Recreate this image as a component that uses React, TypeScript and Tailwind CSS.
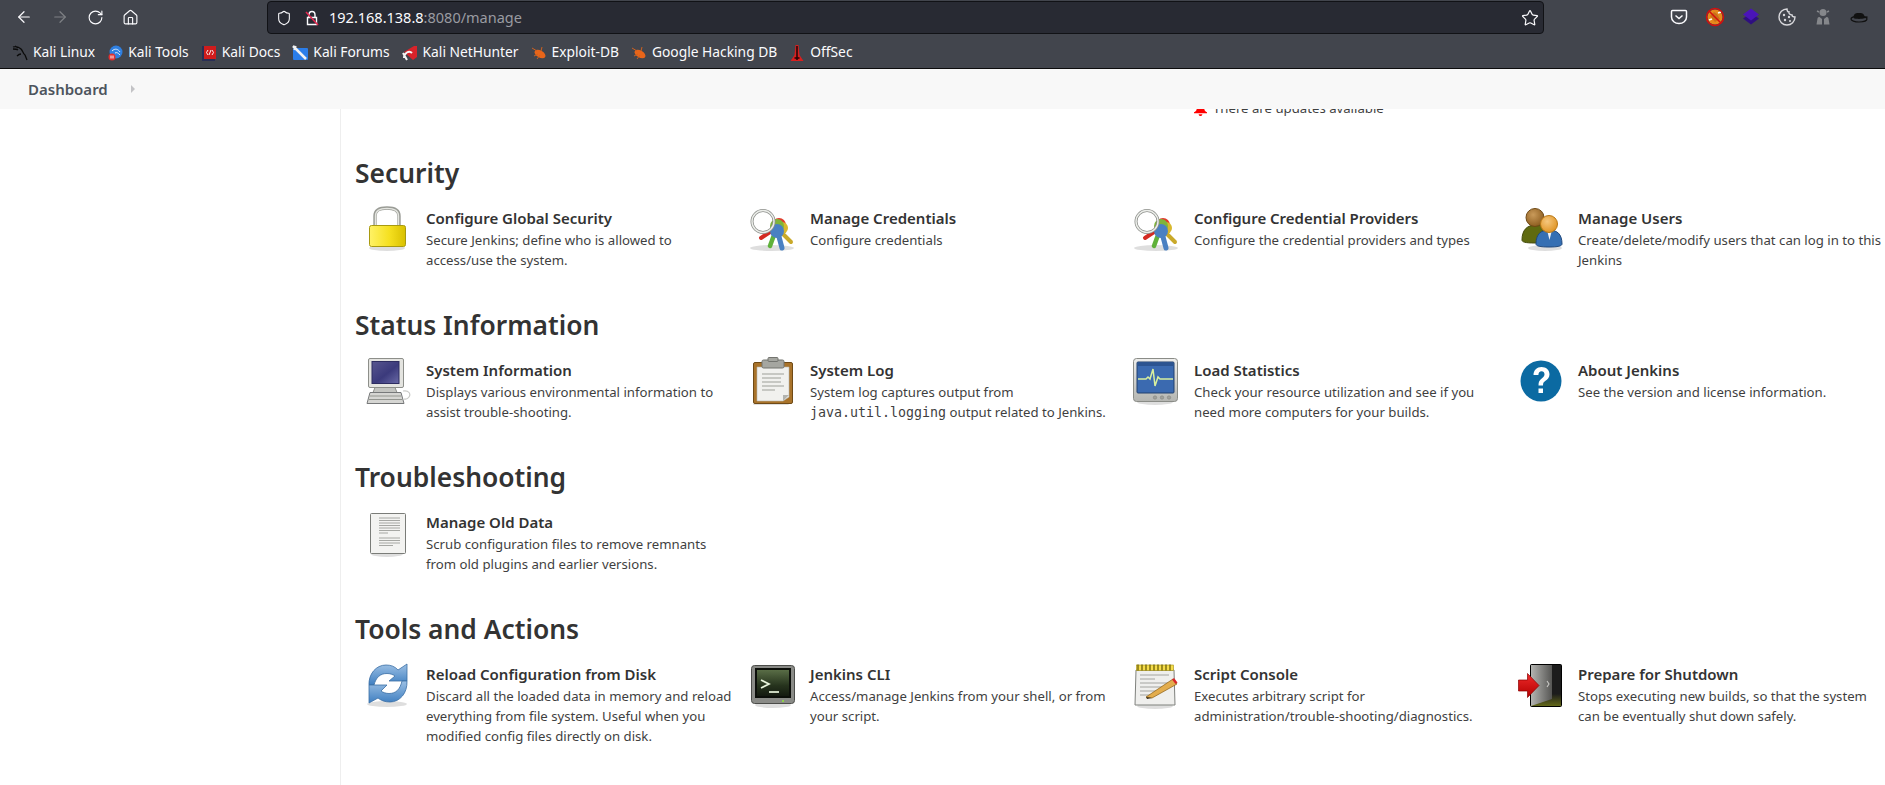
import { FC, ReactNode } from "react";
import { ArrowLeft, ArrowRight, RotateCw, House, Shield, Star } from "lucide-react";

type ItemType = {
  icon: ReactNode;
  title: string;
  text: ReactNode;
};

const Shadow: FC<{ cx?: number; cy?: number; rx?: number }> = ({ cx = 24, cy = 43, rx = 20 }) => (
  <ellipse cx={cx} cy={cy} rx={rx} ry={3} fill="#000" opacity={0.13} />
);

const LockIcon = () => (
  <svg viewBox="0 0 48 48" className="w-12 h-12">
    <defs>
      <linearGradient id="lockBody" x1="0" x2="1" y1="0" y2="0">
        <stop offset="0" stopColor="#fff266" />
        <stop offset="0.55" stopColor="#f5e020" />
        <stop offset="1" stopColor="#d9c000" />
      </linearGradient>
    </defs>
    <Shadow cy={43} rx={18} />
    <path d="M12 21V11C12 5.500 16 3 24 3s12 2.500 12 8v10" fill="none" stroke="#9a9c96" strokeWidth={3.4} />
    <path d="M12.500 21V11C12.500 6 16 3.400 24 3.400S35.500 6 35.500 11v10" fill="none" stroke="#e4e5e0" strokeWidth={1.4} />
    <rect x={6.500} y={20.500} width={36} height={21} rx={2} fill="url(#lockBody)" stroke="#a89a10" />
  </svg>
);

const KeysIcon = () => (
  <svg viewBox="0 0 48 48" className="w-12 h-12">
    <Shadow cx={25} cy={43} rx={22} />
    <g transform="translate(1 0)">
      <path d="M33 27l10 10" stroke="#c9a92a" strokeWidth={4} strokeLinecap="round" />
      <path d="M22 27l-9 6" stroke="#d42a22" strokeWidth={4} strokeLinecap="round" />
      <path d="M26 30l-4 11" stroke="#5fb13a" strokeWidth={4.500} strokeLinecap="round" />
      <circle cx={31} cy={20} r={7} fill="#df3b2c" />
      <circle cx={34} cy={23} r={6} fill="#d8b82e" />
      <circle cx={29} cy={21} r={7} fill="#7fb43a" />
      <circle cx={29} cy={26} r={7} fill="#4a80c2" />
      <path d="M30 28l4 15" stroke="#4a80c2" strokeWidth={5} strokeLinecap="round" />
      <circle cx={15} cy={16.500} r={11} fill="none" stroke="#8e908c" strokeWidth={3} />
      <circle cx={15} cy={16.500} r={11} fill="none" stroke="#eceeea" strokeWidth={1.400} />
    </g>
  </svg>
);

const UsersIcon = () => (
  <svg viewBox="0 0 48 48" className="w-12 h-12">
    <defs>
      <radialGradient id="headA" cx="0.4" cy="0.35" r="0.7">
        <stop offset="0" stopColor="#c99a5a" />
        <stop offset="1" stopColor="#8a5a1c" />
      </radialGradient>
      <radialGradient id="headB" cx="0.4" cy="0.35" r="0.7">
        <stop offset="0" stopColor="#f5c77e" />
        <stop offset="1" stopColor="#df9220" />
      </radialGradient>
    </defs>
    <Shadow cx={30} cy={43} rx={17} />
    <g transform="translate(2 0)">
      <path d="M5 35c0-10 5-15 14-15s12 5 12 15c0 2-3 3-13 3S5 37 5 35z" fill="#5f6a10" stroke="#434a0c" />
      <circle cx={18} cy={12.500} r={9} fill="url(#headA)" stroke="#6e4814" />
      <path d="M19 39c0-10 5-14 13-14s13 4 13 14c0 2-4 3-13 3s-13-1-13-3z" fill="#356fb3" stroke="#21497d" />
      <path d="M30 25h5l-2.500 10z" fill="#eef2f6" />
      <circle cx={32} cy={19} r={8.500} fill="url(#headB)" stroke="#b97714" />
    </g>
  </svg>
);

const ComputerIcon = () => (
  <svg viewBox="0 0 48 48" className="w-12 h-12">
    <defs>
      <linearGradient id="screenBlue" x1="0" x2="1" y1="0" y2="1">
        <stop offset="0" stopColor="#58568f" />
        <stop offset="0.55" stopColor="#3b3a7c" />
        <stop offset="1" stopColor="#6a6aa6" />
      </linearGradient>
    </defs>
    <rect x={5.500} y={1.500} width={35} height={29} rx={1.500} fill="#e4e4e0" stroke="#8d8f8a" />
    <rect x={9} y={4.500} width={27} height={22} fill="url(#screenBlue)" stroke="#2d2c60" />
    <path d="M12 30.500h20l2 5H10z" fill="#c4c5c1" stroke="#8d8f8a" />
    <path d="M7 35.500h31l3 11H4z" fill="#d6d6d3" stroke="#77797a" />
    <path d="M7 39h31M6 42.500h33" stroke="#93958f" strokeWidth={1.200} />
    <path d="M40 34c6-1 8 3 6 6s-4 2-5 2" fill="none" stroke="#c8c9c6" strokeWidth={1.200} />
  </svg>
);

const ClipboardIcon = () => (
  <svg viewBox="0 0 48 48" className="w-12 h-12">
    <Shadow cy={47} rx={18} />
    <rect x={6.500} y={5.500} width={39} height={41} rx={1.500} fill="#a9732a" stroke="#6f4a16" />
    <path d="M10 10h32v30l-6 4H10z" fill="#f1f1ee" stroke="#b5b5b0" strokeWidth={0.6} />
    <path d="M36 44l6-6h-6z" fill="#b2b3ae" />
    <path d="M15 17h22M15 21h19M15 25h19M15 29h22M15 33h13" stroke="#b9bab5" strokeWidth={1.600} />
    <rect x={15} y={3} width={22} height={8} rx={1.500} fill="#a5a6a0" stroke="#73746f" />
    <rect x={21} y={0.500} width={10} height={4} rx={1} fill="#a5a6a0" stroke="#73746f" />
  </svg>
);

const MonitorIcon = () => (
  <svg viewBox="0 0 48 48" className="w-12 h-12">
    <defs>
      <linearGradient id="monCase" x1="0" x2="0" y1="0" y2="1">
        <stop offset="0" stopColor="#eeeeec" />
        <stop offset="1" stopColor="#b4b5b1" />
      </linearGradient>
    </defs>
    <Shadow cy={45} rx={18} />
    <rect x={2.500} y={1.500} width={44} height={43} rx={3} fill="url(#monCase)" stroke="#8a8c87" />
    <rect x={6} y={5} width={37} height={31} rx={1} fill="#3b6ab0" stroke="#22406f" />
    <rect x={7} y={6} width={35} height={3} fill="#2c5491" />
    <path d="M7 22h8l2-2 2 2 3-10 2 17 3-9 2 2h13" fill="none" stroke="#d8ef9e" strokeWidth={1.500} />
    <circle cx={24} cy={40.500} r={1.700} fill="#a0a19c" stroke="#7a7b77" strokeWidth={0.5} />
    <circle cx={31} cy={40.500} r={1.700} fill="#a0a19c" stroke="#7a7b77" strokeWidth={0.5} />
    <circle cx={38} cy={40.500} r={1.700} fill="#a0a19c" stroke="#7a7b77" strokeWidth={0.5} />
  </svg>
);

const HelpIcon = () => (
  <svg viewBox="0 0 48 48" className="w-12 h-12">
    <circle cx={26} cy={24} r={20.500} fill="#0b6aa2" />
    <g transform="translate(3 0)">
      <path d="M15.500 18c0-5 3.500-8 8-8s8 2.800 8 7.200c0 3.300-1.800 5-4.300 6.800-1.800 1.300-2.200 2.200-2.200 4.500h-4.500c0-3.800.9-5.400 3.500-7.300 1.800-1.300 2.500-2.300 2.500-3.900 0-1.800-1.200-3-2.900-3-2 0-3.200 1.400-3.200 3.700z" fill="#fff" />
      <rect x={20.500} y={31.500} width={4.500} height={4.500} fill="#fff" />
    </g>
  </svg>
);

const DocumentIcon = () => (
  <svg viewBox="0 0 48 48" className="w-12 h-12">
    <Shadow cy={45} rx={16} />
    <rect x={7.500} y={4.500} width={35} height={40} rx={1} fill="#f3f3f1" stroke="#7a7c78" />
    <path d="M16 9h21M16 11.500h21M16 14h21M16 16.500h21M16 19h21M16 21.500h21M16 24h9M16 29h21M16 31.500h21M16 34h21M16 36.500h14" stroke="#a6a7a3" />
  </svg>
);

const ReloadIcon = () => (
  <svg viewBox="0 0 48 48" className="w-12 h-12">
    <defs>
      <linearGradient id="reloadBlue" x1="0" x2="0" y1="0" y2="1">
        <stop offset="0" stopColor="#9cc0e4" />
        <stop offset="1" stopColor="#3f7fc1" />
      </linearGradient>
    </defs>
    <Shadow cy={43} rx={20} />
    <path d="M6 24c-.5-11 7-20 17-20 5 0 9 1.500 12 5l9-6v17H26l6-5c-2-1.500-5-2.500-8-2.500-7 0-11 4-13 11.500z" fill="url(#reloadBlue)" stroke="#3b6ea5" strokeWidth={0.8} />
    <path d="M44 20c.5 12-7 21-17 21-5 0-9-1.500-12-4l-9 5V24h18l-6 6c2 1.500 5 2.500 8 2.500 7 0 11-4 13-12.500z" fill="url(#reloadBlue)" stroke="#3b6ea5" strokeWidth={0.8} />
  </svg>
);

const TerminalIcon = () => (
  <svg viewBox="0 0 48 48" className="w-12 h-12">
    <defs>
      <linearGradient id="termScreen" x1="0" x2="0" y1="0" y2="1">
        <stop offset="0" stopColor="#596d46" />
        <stop offset="0.6" stopColor="#26331d" />
        <stop offset="1" stopColor="#141a10" />
      </linearGradient>
    </defs>
    <Shadow cx={26} cy={44} rx={18} />
    <rect x={4.500} y={4.500} width={43} height={38} rx={3} fill="#8a8b87" stroke="#4b4c49" />
    <rect x={8} y={7} width={36} height={30} fill="#0c0f0a" />
    <rect x={10} y={9} width={32} height={26} fill="url(#termScreen)" />
    <path d="M14 19l8 4-8 4" fill="none" stroke="#e9f5dc" strokeWidth={1.700} />
    <path d="M22 31h10" stroke="#e9f5dc" strokeWidth={1.700} />
    <rect x={35} y={39} width={2} height={2} fill="#8ed24a" />
  </svg>
);

const NotepadIcon = () => (
  <svg viewBox="0 0 48 48" className="w-12 h-12">
    <Shadow cy={45} rx={18} />
    <path d="M5 9h38l1 35H4z" fill="#efefed" stroke="#7f817d" />
    <rect x={5.500} y={4} width={37} height={5.500} fill="#f6dd4a" stroke="#a08c12" strokeWidth={0.6} />
    <path d="M7 3.500v6M11 3.500v6M15 3.500v6M19 3.500v6M23 3.500v6M27 3.500v6M31 3.500v6M35 3.500v6M39 3.500v6" stroke="#6e6208" strokeWidth={1.300} />
    <path d="M9 14h29M9 18h15M9 22h29M9 26h24M9 30h22M9 34h10" stroke="#a3a4a0" />
    <path d="M15 36l27-18 4 5-25 14z" fill="#e3ad4d" stroke="#8a5d12" strokeWidth={0.7} />
    <path d="M41 18.500l2-1.500 3.500 4.500-2 1.500z" fill="#d8272a" />
    <path d="M15 36l6 1-5 1z" fill="#3a2a10" />
  </svg>
);

const DoorIcon = () => (
  <svg viewBox="0 0 48 48" className="w-12 h-12">
    <defs>
      <linearGradient id="doorGrey" x1="0" x2="1" y1="0" y2="0">
        <stop offset="0" stopColor="#b4b4b1" />
        <stop offset="1" stopColor="#565654" />
      </linearGradient>
      <linearGradient id="doorFloor" x1="0" x2="0" y1="0" y2="1">
        <stop offset="0.7" stopColor="#1c1c1c" />
        <stop offset="1" stopColor="#666b18" />
      </linearGradient>
      <linearGradient id="doorArrow" x1="0" x2="0" y1="0" y2="1">
        <stop offset="0" stopColor="#ef2b2b" />
        <stop offset="1" stopColor="#b20000" />
      </linearGradient>
    </defs>
    <rect x={15.500} y={3.500} width={31} height={42} rx={1} fill="url(#doorFloor)" stroke="#000" />
    <path d="M16 4h21v34L16 45z" fill="url(#doorGrey)" />
    <path d="M32 20l2 3-2 3" fill="none" stroke="#c9c9c6" strokeWidth={1.100} />
    <path d="M3.500 19h9v-6.500L24 24.500 12.500 36.500v-6.500h-9z" fill="url(#doorArrow)" stroke="#8c0000" strokeWidth={0.7} />
  </svg>
);

const sections: { title: string; items: ItemType[] }[] = [
  {
    title: "Security",
    items: [
      { icon: <LockIcon />, title: "Configure Global Security", text: "Secure Jenkins; define who is allowed to access/use the system." },
      { icon: <KeysIcon />, title: "Manage Credentials", text: "Configure credentials" },
      { icon: <KeysIcon />, title: "Configure Credential Providers", text: "Configure the credential providers and types" },
      { icon: <UsersIcon />, title: "Manage Users", text: "Create/delete/modify users that can log in to this Jenkins" }
    ]
  },
  {
    title: "Status Information",
    items: [
      { icon: <ComputerIcon />, title: "System Information", text: "Displays various environmental information to assist trouble-shooting." },
      {
        icon: <ClipboardIcon />,
        title: "System Log",
        text: (
          <>
            System log captures output from{" "}
            <code className="font-['DejaVu_Sans_Mono',monospace] text-[13.3px]">java.util.logging</code> output related to Jenkins.
          </>
        )
      },
      { icon: <MonitorIcon />, title: "Load Statistics", text: "Check your resource utilization and see if you need more computers for your builds." },
      { icon: <HelpIcon />, title: "About Jenkins", text: "See the version and license information." }
    ]
  },
  {
    title: "Troubleshooting",
    items: [
      { icon: <DocumentIcon />, title: "Manage Old Data", text: "Scrub configuration files to remove remnants from old plugins and earlier versions." }
    ]
  },
  {
    title: "Tools and Actions",
    items: [
      { icon: <ReloadIcon />, title: "Reload Configuration from Disk", text: "Discard all the loaded data in memory and reload everything from file system. Useful when you modified config files directly on disk." },
      { icon: <TerminalIcon />, title: "Jenkins CLI", text: "Access/manage Jenkins from your shell, or from your script." },
      { icon: <NotepadIcon />, title: "Script Console", text: "Executes arbitrary script for administration/trouble-shooting/diagnostics." },
      { icon: <DoorIcon />, title: "Prepare for Shutdown", text: "Stops executing new builds, so that the system can be eventually shut down safely." }
    ]
  }
];

const BugIcon = () => (
  <svg viewBox="0 0 16 16" className="w-4 h-4">
    <ellipse cx={9} cy={9} rx={6} ry={3.500} transform="rotate(30 9 9)" fill="#e8651a" />
    <path d="M1 3l5 3M3 11l4-2M6 14l3-4M11 2l-1 4" stroke="#d0611f" />
  </svg>
);

const bookmarks: { label: string; icon: ReactNode }[] = [
  {
    label: "Kali Linux",
    icon: (
      <svg viewBox="0 0 16 16" className="w-4 h-4">
        <path d="M1 2c3-1 6 0 8 2 2 2 2 5 4 6l2 5M3 1l3 2M1 4c2 0 4 0 5 1M9 9c-2 0-3 1-4 2" fill="none" stroke="#0b0b0b" strokeWidth={1.300} />
      </svg>
    )
  },
  {
    label: "Kali Tools",
    icon: (
      <svg viewBox="0 0 16 16" className="w-4 h-4">
        <circle cx={9} cy={7} r={6.500} fill="#2f7fe0" />
        <path d="M5 6c3-3 6-2 8 1M8 8c2-1 3 0 5 2" fill="none" stroke="#dfeefc" />
        <circle cx={5} cy={12} r={3.500} fill="#e03030" />
        <path d="M4 10.500v3M6 10.500v3" stroke="#fff" />
      </svg>
    )
  },
  {
    label: "Kali Docs",
    icon: (
      <svg viewBox="0 0 16 16" className="w-4 h-4">
        <rect x={1} y={1} width={13} height={15} fill="#2a2f55" />
        <rect x={3} y={1} width={12} height={13} fill="#d01c1c" />
        <path d="M7 5L5.500 7.500 7 10M11 5l1.500 2.500L11 10M10 5L8 10" fill="none" stroke="#fff" strokeWidth={0.9} />
      </svg>
    )
  },
  {
    label: "Kali Forums",
    icon: (
      <svg viewBox="0 0 16 16" className="w-4 h-4">
        <rect x={1} y={3} width={15} height={12} rx={1} fill="#2b7de9" />
        <path d="M1 1l13 13" stroke="#f2f2f2" strokeWidth={2.500} />
        <path d="M4 1L2 5" stroke="#f2f2f2" strokeWidth={1.500} />
      </svg>
    )
  },
  {
    label: "Kali NetHunter",
    icon: (
      <svg viewBox="0 0 16 16" className="w-4 h-4">
        <path d="M2 7l10-6h3v11l-4 3z" fill="#d8232a" />
        <path d="M2 13c0-5 5-8 8-5M1 8l4 7" fill="none" stroke="#f4f4f4" strokeWidth={2} />
      </svg>
    )
  },
  { label: "Exploit-DB", icon: <BugIcon /> },
  { label: "Google Hacking DB", icon: <BugIcon /> },
  {
    label: "OffSec",
    icon: (
      <svg viewBox="0 0 16 16" className="w-4 h-4">
        <path d="M6.500 0h3l1 10 4 6h-13l4-6z" fill="#d81f1f" />
        <path d="M8 1v14M5.500 13h5" stroke="#220505" strokeWidth={1.500} />
      </svg>
    )
  }
];

const ToolbarAddons = () => (
  <div className="flex items-center gap-[16px] mr-[16px]">
    <svg viewBox="0 0 20 20" className="w-5 h-5">
      <path d="M3.500 3.500h13c.8 0 1 .5 1 1V10c0 4-3.500 6.500-7.500 6.500S2.500 14 2.500 10V4.500c0-.5.200-1 1-1z" fill="none" stroke="#fbfbfe" strokeWidth={1.500} />
      <path d="M6.500 8.500L10 11.500l3.500-3" fill="none" stroke="#fbfbfe" strokeWidth={1.500} />
    </svg>
    <svg viewBox="0 0 20 20" className="w-5 h-5">
      <circle cx={10} cy={10} r={7.500} fill="#e58a1c" />
      <path d="M5 9l4-4 3 2 3 5-5 3z" fill="#c9701a" />
      <path d="M4 13l3-1M13 6l3-1" stroke="#fff" strokeWidth={1.500} />
      <circle cx={10} cy={10} r={8.500} fill="none" stroke="#d40f0f" strokeWidth={1.500} />
      <path d="M4 4l12 12" stroke="#d40f0f" strokeWidth={1.500} />
    </svg>
    <svg viewBox="0 0 20 20" className="w-5 h-5">
      <path d="M10 6l8 5.500-8 6-8-6z" fill="#2f0f80" />
      <path d="M10 1.500l8 6-8 6-8-6z" fill="#4a14b8" />
    </svg>
    <svg viewBox="0 0 20 20" className="w-5 h-5">
      <path d="M10 2a8 8 0 1 0 8 8c-2 0-3-1-3-2-2 0-3.500-1.500-3-3-1.500 0-2-1.500-2-3z" fill="none" stroke="#d8d8dc" strokeWidth={1.400} />
      <circle cx={7} cy={8} r={1.200} fill="#d8d8dc" />
      <circle cx={12} cy={10} r={1.200} fill="#d8d8dc" />
      <circle cx={8} cy={13} r={1.200} fill="#d8d8dc" />
      <circle cx={13} cy={14} r={1} fill="#d8d8dc" />
    </svg>
    <svg viewBox="0 0 20 20" className="w-5 h-5">
      <circle cx={10} cy={5.500} r={3.500} fill="#85878b" />
      <path d="M4 4l2 1M16 4l-2 1" stroke="#85878b" strokeWidth={1.500} />
      <path d="M3.500 17.500l1-6c.2-1 1-1.500 2-1.500L9 12v5.500zM16.500 17.500l-1-6c-.2-1-1-1.500-2-1.500L11 12v5.500z" fill="#85878b" />
    </svg>
    <svg viewBox="0 0 20 20" className="w-5 h-5">
      <ellipse cx={10} cy={12} rx={8} ry={3} fill="none" stroke="#111" strokeWidth={1.200} />
      <path d="M4.500 11c0-3 .5-5 5.500-5s5.500 2 5.500 5c-2 1.200-9 1.200-11 0z" fill="#111" />
      <path d="M15 10.500l3.500-.5" stroke="#111" strokeWidth={1.400} />
    </svg>
  </div>
);

const Browser = () => (
  <header className="h-[69px] shrink-0 bg-[#42454d] border-b border-[#0c0c0d] font-['Noto_Sans',sans-serif] text-[#fbfbfe]">
    <div className="flex items-center h-[35px] pb-[1px]">
      <div className="flex items-center w-[267px] pl-[15px] gap-[18px]">
        <ArrowLeft size={18} strokeWidth={1.6} />
        <ArrowRight size={18} strokeWidth={1.6} className="text-[#7e8085]" />
        <RotateCw size={17} strokeWidth={1.6} />
        <House size={17} strokeWidth={1.6} />
      </div>
      <div className="flex flex-1 items-center h-[33px] mt-[1px] rounded-[4px] bg-[#282a33] border border-[#111216] pl-[8px] pr-[4px]">
        <Shield size={16} strokeWidth={1.6} />
        <svg viewBox="0 0 16 16" className="w-4 h-4 ml-[12px]">
          <path d="M3.500 7.500h9v7h-9z" fill="none" stroke="#fbfbfe" strokeWidth={1.400} />
          <path d="M5 7.500V5c0-2 1.200-3.500 3-3.500S11 3 11 5v2.500" fill="none" stroke="#fbfbfe" strokeWidth={1.400} />
          <path d="M2 2l12 13" stroke="#e22850" strokeWidth={1.600} />
        </svg>
        <span className="ml-[9px] text-[14.5px] leading-none">
          192.168.138.8<span className="text-[#9a9ba1]">:8080/manage</span>
        </span>
        <Star size={18} strokeWidth={1.6} className="ml-auto" />
      </div>
      <div className="flex justify-end w-[341px]">
        <ToolbarAddons />
      </div>
    </div>
    <div className="flex items-center h-[33px] pt-[2px] pl-[12px] gap-[12px] text-[13.8px]">
      {bookmarks.map((b) => (
        <div key={b.label} className="flex items-center gap-[5px]">
          {b.icon}
          <span>{b.label}</span>
        </div>
      ))}
    </div>
  </header>
);

const Item: FC<ItemType> = ({ icon, title, text }) => (
  <div className="flex gap-[15px] pl-4">
    <div className="w-12 h-12 shrink-0 -mt-[3px]">{icon}</div>
    <div className="flex-1 -mr-[7px]">
      <p className="text-[15px] leading-5 font-semibold text-[#333]">{title}</p>
      <p className="mt-[2px] text-[13.2px] leading-5 text-[#3f3f3f]">{text}</p>
    </div>
  </div>
);

export default function App() {
  return (
    <div className="flex flex-col w-[1885px] h-[785px] overflow-hidden bg-white font-['Noto_Sans',sans-serif]">
      <Browser />

      <div className="flex items-center h-[40px] shrink-0 bg-[#f8f8f8] pl-[28px]">
        <span className="text-[15px] font-semibold text-[#4d545d]">Dashboard</span>
        <svg viewBox="0 0 6 8" className="w-[6px] h-2 ml-[22px]">
          <path d="M1 0l4 4-4 4z" fill="#c3c3c6" />
        </svg>
      </div>

      <div className="flex flex-1 overflow-hidden">
        <aside className="w-[340px] shrink-0" />

        <main className="flex-1 border-l border-[#eee]">
          <div className="flex items-center h-5 -mt-[10px] ml-[853px] gap-[6px] text-[13.2px] text-[#3f3f3f]">
            <svg viewBox="0 0 14 14" className="w-[13px] h-[13px]">
              <path d="M7 0c3 0 4 2 4 5 0 3 1 4 3 5v1H0v-1c2-1 3-2 3-5 0-3 1-5 4-5zM5 12h4c0 1-1 2-2 2s-2-1-2-2z" fill="#f00" />
            </svg>
            <span>There are updates available</span>
          </div>

          <div className="mt-[36px] pl-[6px] pr-[2px]">
            {sections.map((s) => (
              <section key={s.title} className="h-[152px]">
                <h2 className="pl-[8px] h-[36px] mb-[17px] text-[26.4px] leading-[36px] font-semibold text-[#333]">{s.title}</h2>
                <div className="grid grid-cols-4">
                  {s.items.map((i) => (
                    <Item key={i.title} {...i} />
                  ))}
                </div>
              </section>
            ))}
          </div>
        </main>
      </div>
    </div>
  );
}
